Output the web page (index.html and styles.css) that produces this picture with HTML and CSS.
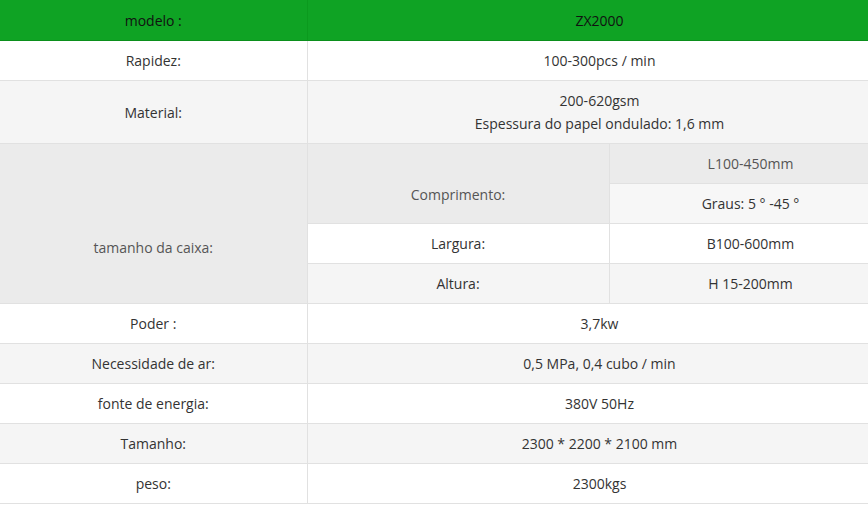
FILE: index.html
```html
<!DOCTYPE html>
<html lang="pt">
<head>
<meta charset="utf-8">
<title>ZX2000</title>
<link rel="stylesheet" href="styles.css">
</head>
<body>
<table class="spec">
  <colgroup>
    <col class="c1"><col class="c2"><col class="c3">
  </colgroup>
  <tr class="head">
    <td>modelo :</td>
    <td colspan="2">ZX2000</td>
  </tr>
  <tr class="white">
    <td>Rapidez:</td>
    <td colspan="2">100-300pcs / min</td>
  </tr>
  <tr class="grey">
    <td>Material:</td>
    <td colspan="2">200-620gsm<br>Espessura do papel ondulado: 1,6 mm</td>
  </tr>
  <tr class="dark">
    <td rowspan="4" class="size">tamanho da caixa:</td>
    <td rowspan="2" class="comp">Comprimento:</td>
    <td class="muted">L100-450mm</td>
  </tr>
  <tr class="light">
    <td>Graus: 5 ° -45 °</td>
  </tr>
  <tr class="white">
    <td>Largura:</td>
    <td>B100-600mm</td>
  </tr>
  <tr class="grey">
    <td>Altura:</td>
    <td>H 15-200mm</td>
  </tr>
  <tr class="white">
    <td>Poder :</td>
    <td colspan="2">3,7kw</td>
  </tr>
  <tr class="grey">
    <td>Necessidade de ar:</td>
    <td colspan="2">0,5 MPa, 0,4 cubo / min</td>
  </tr>
  <tr class="white">
    <td>fonte de energia:</td>
    <td colspan="2">380V 50Hz</td>
  </tr>
  <tr class="grey">
    <td>Tamanho:</td>
    <td colspan="2">2300 * 2200 * 2100 mm</td>
  </tr>
  <tr class="white">
    <td>peso:</td>
    <td colspan="2">2300kgs</td>
  </tr>
</table>
</body>
</html>
```
FILE: styles.css
```css
html, body {
  margin: 0;
  padding: 0;
  background: #ffffff;
  overflow: hidden;
}
.spec {
  width: 892px;
  border-collapse: collapse;
  table-layout: fixed;
  font-family: "Open Sans", "Noto Sans", sans-serif;
  font-size: 14px;
  line-height: 23px;
  color: #333333;
}
.c1 { width: 307px; }
.c2 { width: 302px; }
.c3 { width: 283px; }
.spec td {
  text-align: center;
  vertical-align: middle;
  padding: 8px 4px;
  border: 1px solid #e1e1e1;
  border-top: 0;
}
.spec tr td:first-child { border-left: 0; }
.head td {
  background: #0fa324;
  color: #111111;
  padding-top: 9px;
  border-color: #0b9a1e;
  border-bottom: 1px solid #0b8f1c;
}
.white td { background: #ffffff; }
.grey td { background: #f5f5f5; }
.dark td { background: #ebebeb; color: #555555; }
.light td { background: #f7f7f7; }
.spec td.size {
  background: #ebebeb;
  color: #555555;
  vertical-align: top;
  padding-top: 92px;
}
.spec td.comp {
  background: #ebebeb;
  color: #555555;
  vertical-align: top;
  padding-top: 39px;
}
```
